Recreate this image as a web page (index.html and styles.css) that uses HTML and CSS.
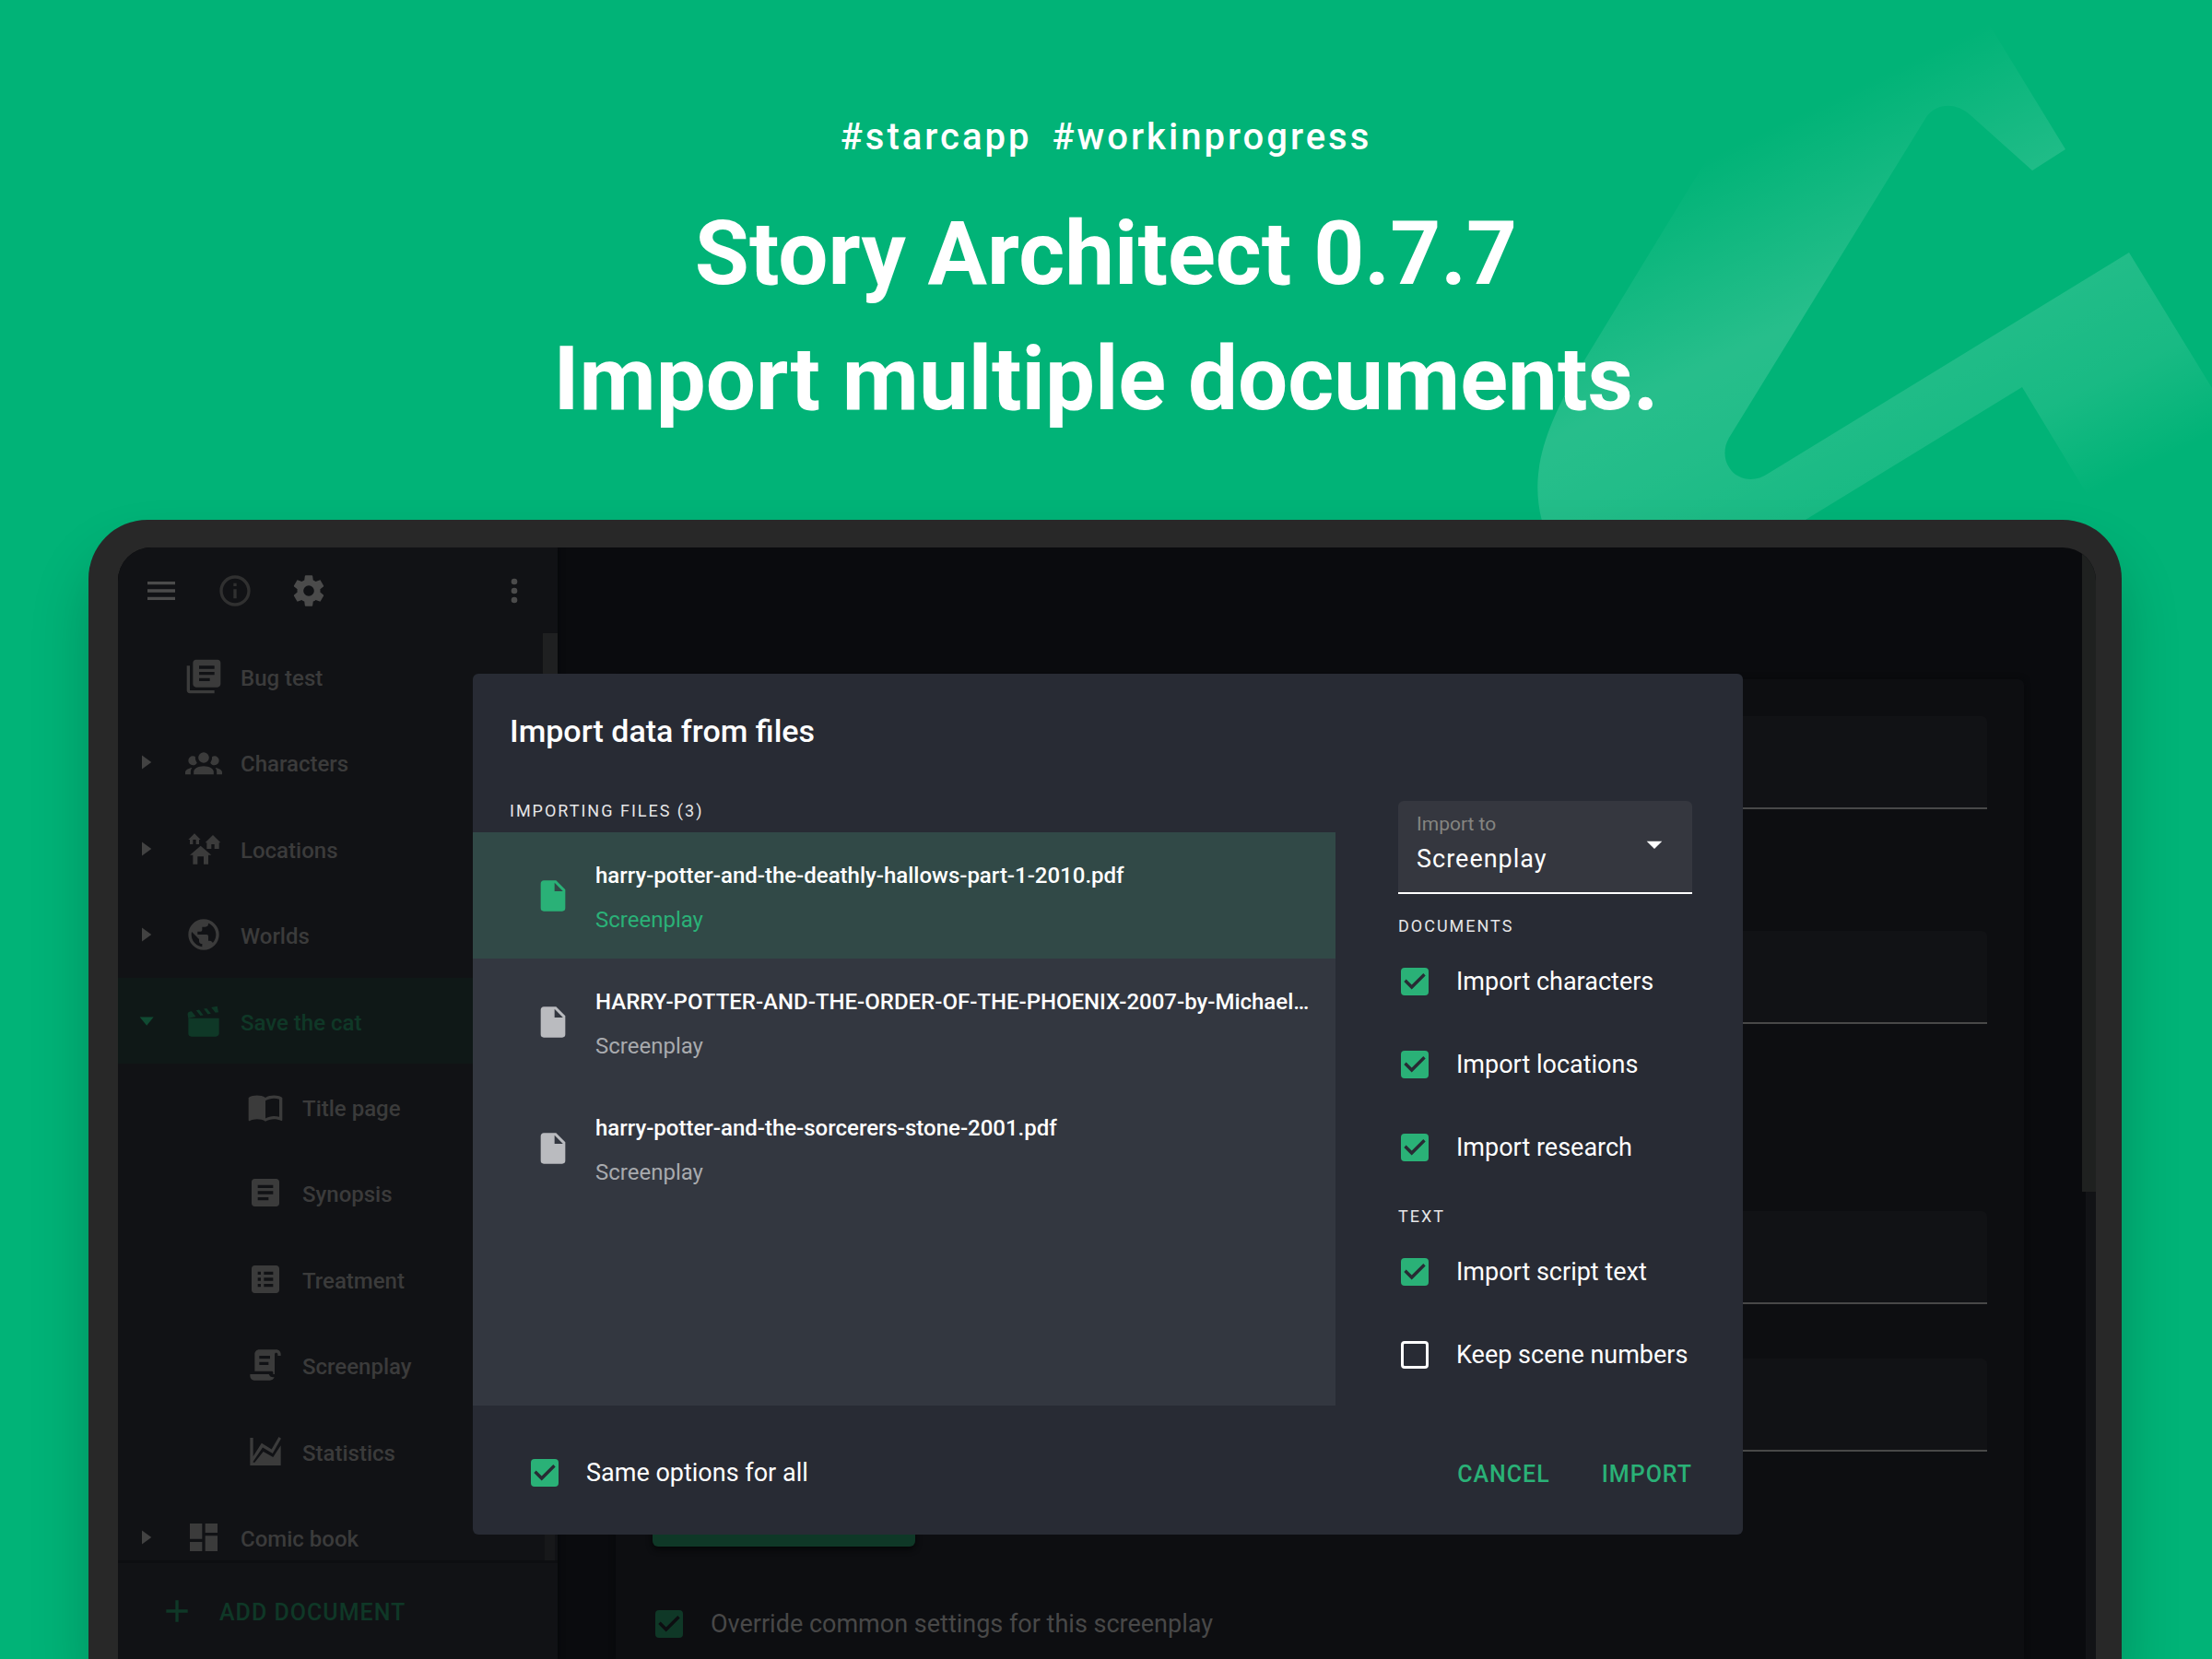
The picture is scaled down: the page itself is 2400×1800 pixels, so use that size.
FILE: index.html
```html
<!DOCTYPE html>
<html lang="en">
<head>
<meta charset="utf-8">
<meta name="viewport" content="width=device-width, initial-scale=1">
<title>Story Architect 0.7.7</title>
<link rel="stylesheet" href="styles.css">
</head>
<body class="page">
<svg class="emblem" viewBox="1660 0 740 600" aria-hidden="true">
  <defs>
    <linearGradient id="fade" gradientUnits="userSpaceOnUse" x1="2045" y1="78" x2="2266" y2="538">
      <stop offset="0" stop-color="#fff" stop-opacity="0"/>
      <stop offset=".4" stop-color="#fff" stop-opacity=".15"/>
      <stop offset=".57" stop-color="#fff" stop-opacity=".13"/>
      <stop offset=".79" stop-color="#fff" stop-opacity=".095"/>
      <stop offset="1" stop-color="#fff" stop-opacity="0"/>
    </linearGradient>
  </defs>
  <path fill="url(#fade)" d="M2142 0L2241 162L2205 185L2138 125C2122 110 2100 112 2090 127L1876 475C1869 487 1871 500 1876 507C1884 521 1904 524 1918 514L2310 274L2400 421V640L2320 628L2194 420L1900 600H1686C1655 535 1664 482 1719 391L1940 28L1960 0Z"/>
</svg>

<header class="hero">
  <p class="tags"><span>#starcapp</span><span>#workinprogress</span></p>
  <h1 class="headline">Story Architect 0.7.7<br>Import multiple documents.</h1>
</header>

<main class="device">
  <div class="screen">
    <aside class="sidebar">
      <div class="toolbar">
        <button class="tool" aria-label="Menu"><svg class="icon" viewBox="0 0 24 24"><path d="M3 6h18v2H3V6m0 5h18v2H3v-2m0 5h18v2H3v-2z"/></svg></button>
        <button class="tool tool-faint" aria-label="Information"><svg class="icon" viewBox="0 0 24 24"><path d="M11 9h2V7h-2m1 13c-4.41 0-8-3.59-8-8s3.59-8 8-8 8 3.59 8 8-3.59 8-8 8m0-18A10 10 0 0 0 2 12a10 10 0 0 0 10 10 10 10 0 0 0 10-10A10 10 0 0 0 12 2m-1 15h2v-6h-2v6z"/></svg></button>
        <button class="tool" aria-label="Settings"><svg class="icon" viewBox="0 0 24 24"><path d="M12 15.5A3.5 3.5 0 0 1 8.5 12 3.5 3.5 0 0 1 12 8.5a3.5 3.5 0 0 1 3.5 3.5 3.5 3.5 0 0 1-3.5 3.5m7.43-2.53c.04-.32.07-.64.07-.97 0-.33-.03-.66-.07-1l2.11-1.63c.19-.15.24-.42.12-.64l-2-3.46c-.12-.22-.39-.31-.61-.22l-2.49 1c-.52-.39-1.06-.73-1.69-.98l-.37-2.65A.506.506 0 0 0 14 2h-4c-.25 0-.46.18-.5.42l-.37 2.65c-.63.25-1.17.59-1.69.98l-2.49-1c-.22-.09-.49 0-.61.22l-2 3.46c-.13.22-.07.49.12.64L4.57 11c-.04.34-.07.67-.07 1 0 .33.03.65.07.97l-2.11 1.66c-.19.15-.25.42-.12.64l2 3.46c.12.22.39.3.61.22l2.49-1.01c.52.4 1.06.74 1.69.99l.37 2.65c.04.24.25.42.5.42h4c.25 0 .46-.18.5-.42l.37-2.65c.63-.26 1.17-.59 1.69-.99l2.49 1.01c.22.08.49 0 .61-.22l2-3.46c.12-.22.07-.49-.12-.64l-2.11-1.66z"/></svg></button>
        <button class="tool tool-end" aria-label="More"><svg class="icon" viewBox="0 0 24 24"><path d="M12 16a2 2 0 0 1 2 2 2 2 0 0 1-2 2 2 2 0 0 1-2-2 2 2 0 0 1 2-2m0-6a2 2 0 0 1 2 2 2 2 0 0 1-2 2 2 2 0 0 1-2-2 2 2 0 0 1 2-2m0-6a2 2 0 0 1 2 2 2 2 0 0 1-2 2 2 2 0 0 1-2-2 2 2 0 0 1 2-2z"/></svg></button>
      </div>

      <nav class="documents">
        <ul class="tree">
          <li class="node">
            <span class="arrow"></span>
            <svg class="icon" viewBox="0 0 24 24"><path fill-rule="evenodd" d="M19 23H3c-1.1 0-2-.9-2-2V5h2v16h16v2M21 1H7c-1.1 0-2 .9-2 2v14c0 1.1.9 2 2 2h14c1.1 0 2-.9 2-2V3c0-1.1-.9-2-2-2M9 5h10v2H9V5m0 4h10v2H9V9m0 4h7v2H9v-2z"/></svg>
            <span class="name">Bug test</span>
          </li>
          <li class="node">
            <svg class="arrow" viewBox="0 0 24 24"><path d="M9.6 7.5l6.2 4.5-6.2 4.5z"/></svg>
            <svg class="icon" viewBox="0 0 24 24"><path d="M12 5.5A3.5 3.5 0 0 1 15.5 9 3.5 3.5 0 0 1 12 12.5 3.5 3.5 0 0 1 8.5 9 3.5 3.5 0 0 1 12 5.5M5 8c.56 0 1.08.15 1.53.42-.15 1.43.27 2.85 1.13 3.96C7.16 13.34 6.16 14 5 14a3 3 0 0 1-3-3 3 3 0 0 1 3-3m14 0a3 3 0 0 1 3 3 3 3 0 0 1-3 3c-1.16 0-2.16-.66-2.66-1.62a5.536 5.536 0 0 0 1.13-3.96c.45-.27.97-.42 1.53-.42M5.5 18.25c0-2.07 2.91-3.75 6.5-3.75s6.5 1.68 6.5 3.75V20h-13v-1.75M0 20v-1.5c0-1.39 1.89-2.56 4.45-2.9-.59.68-.95 1.62-.95 2.65V20H0m24 0h-3.5v-1.75c0-1.03-.36-1.97-.95-2.65 2.56.34 4.45 1.51 4.45 2.9V20z"/></svg>
            <span class="name">Characters</span>
          </li>
          <li class="node">
            <svg class="arrow" viewBox="0 0 24 24"><path d="M9.6 7.5l6.2 4.5-6.2 4.5z"/></svg>
            <svg class="icon" viewBox="0 0 24 24"><path d="M17 16h-2v6h-3v-5H8v5H5v-6H3l7-6 7 6M6 2l4 4H9v3H7V6H5v3H3V6H2l4-4m12 1l5 5h-1v4h-3V9h-2v3h-3V8h-1l5-5z"/></svg>
            <span class="name">Locations</span>
          </li>
          <li class="node">
            <svg class="arrow" viewBox="0 0 24 24"><path d="M9.6 7.5l6.2 4.5-6.2 4.5z"/></svg>
            <svg class="icon" viewBox="0 0 24 24"><path d="M17.9 17.39c-.26-.8-1.01-1.39-1.9-1.39h-1v-3a1 1 0 0 0-1-1H8v-2h2a1 1 0 0 0 1-1V7h2a2 2 0 0 0 2-2v-.41c2.93 1.18 5 4.05 5 7.41 0 2.08-.8 3.97-2.1 5.39M11 19.93c-3.95-.49-7-3.85-7-7.93 0-.62.08-1.22.21-1.79L9 15v1a2 2 0 0 0 2 2m1-16A10 10 0 0 0 2 12a10 10 0 0 0 10 10 10 10 0 0 0 10-10A10 10 0 0 0 12 2z"/></svg>
            <span class="name">Worlds</span>
          </li>
          <li class="node node-selected">
            <svg class="arrow" viewBox="0 0 24 24"><path d="M8.2 9.3h9l-4.5 5.6z"/></svg>
            <svg class="icon" viewBox="0 0 24 24"><path d="M20.84 2.18l-3.93.78 2.74 3.54 1.97-.4-.78-3.92m-6.87 1.36L12 3.93l2.75 3.53 1.96-.39-2.74-3.53m-4.9.96l-1.97.41 2.75 3.53 1.96-.39L9.07 4.5m-4.91 1l-.98.19a1.995 1.995 0 0 0-1.57 2.35L2 10l4.9-.97L4.16 5.5M2 10v10a2 2 0 0 0 2 2h16c1.11 0 2-.89 2-2V10H2z"/></svg>
            <span class="name">Save the cat</span>
          </li>
          <li class="node node-child">
            <svg class="icon" viewBox="0 0 24 24"><path fill-rule="evenodd" d="M21 5c-1.11-.35-2.33-.5-3.5-.5-1.95 0-4.05.4-5.5 1.5-1.45-1.1-3.55-1.5-5.5-1.5S2.45 4.9 1 6v14.65c0 .25.25.5.5.5.1 0 .15-.05.25-.05C3.1 20.45 5.05 20 6.5 20c1.95 0 4.05.4 5.5 1.5 1.35-.85 3.8-1.5 5.5-1.5 1.65 0 3.35.3 4.75 1.05.1.05.15.05.25.05.25 0 .5-.25.5-.5V6c-.6-.45-1.25-.75-2-1m0 13.5c-1.1-.35-2.3-.5-3.5-.5-1.7 0-4.15.65-5.5 1.5V8c1.35-.85 3.8-1.5 5.5-1.5 1.2 0 2.4.15 3.5.5v11.5z"/></svg>
            <span class="name">Title page</span>
          </li>
          <li class="node node-child">
            <svg class="icon" viewBox="0 0 24 24"><path fill-rule="evenodd" d="M19 3H5c-1.1 0-2 .9-2 2v14c0 1.1.9 2 2 2h14c1.1 0 2-.9 2-2V5c0-1.1-.9-2-2-2M7 7h10v2H7V7m0 4h10v2H7v-2m0 4h7v2H7v-2z"/></svg>
            <span class="name">Synopsis</span>
          </li>
          <li class="node node-child">
            <svg class="icon" viewBox="0 0 24 24"><path fill-rule="evenodd" d="M19 3H5c-1.1 0-2 .9-2 2v14c0 1.1.9 2 2 2h14c1.1 0 2-.9 2-2V5c0-1.1-.9-2-2-2M7 7h2v2H7V7m0 4h2v2H7v-2m0 4h2v2H7v-2m4-8h6v2h-6V7m0 4h6v2h-6v-2m0 4h6v2h-6v-2z"/></svg>
            <span class="name">Treatment</span>
          </li>
          <li class="node node-child">
            <svg class="icon" viewBox="0 0 24 24"><path fill-rule="evenodd" d="M17.8 20c-.4 1.2-1.5 2-2.8 2H5c-1.7 0-3-1.3-3-3v-1h12.2c.4 1.2 1.5 2 2.8 2h.8M19 2H8C6.3 2 5 3.3 5 5v11h11c.6 0 1 .4 1 1v1h1V5c0-.6.4-1 1-1s1 .4 1 1v1h2V5c0-1.7-1.3-3-3-3M8 6h7v2H8V6m0 4h6v2H8v-2z"/></svg>
            <span class="name">Screenplay</span>
          </li>
          <li class="node node-child">
            <svg class="icon" viewBox="0 0 24 24"><path d="M2 3h2v12.200L9.500 6.500l6.500 4L20.700 2.400l1.500 1-5.500 9.800-6.500-3.900L4 18.500v.5h1l5.600-7 6.400 3.600 5-7.600V21H2z"/></svg>
            <span class="name">Statistics</span>
          </li>
          <li class="node">
            <svg class="arrow" viewBox="0 0 24 24"><path d="M9.6 7.5l6.2 4.5-6.2 4.5z"/></svg>
            <svg class="icon" viewBox="0 0 24 24"><path d="M3 3h8v10H3zM13 3h8v6h-8zM3 15h8v6H3zM13 11h8v10h-8z"/></svg>
            <span class="name">Comic book</span>
          </li>
        </ul>
        <div class="scrollbar scrollbar-tree"><div class="thumb"></div></div>
      </nav>

      <div class="sidebar-footer">
        <button class="add-document">
          <svg class="icon" viewBox="0 0 24 24"><path d="M19 13h-6v6h-2v-6H5v-2h6V5h2v6h6v2z"/></svg>
          <span class="name">ADD DOCUMENT</span>
        </button>
      </div>
    </aside>

    <section class="editor">
      <form class="settings-card">
        <input class="text-field" type="text" aria-label="Title">
        <input class="text-field text-field-second" type="text" aria-label="Tagline">
        <input class="text-field text-field-third" type="text" aria-label="Logline">
        <input class="text-field text-field-fourth" type="text" aria-label="Header">
        <button class="filled-button" type="button" aria-label="Apply"></button>
        <label class="check check-dim"><input class="box" type="checkbox" checked>Override common settings for this screenplay</label>
      </form>
      <div class="scrollbar scrollbar-editor"><div class="thumb"></div></div>
    </section>

    <div class="overlay">
      <div class="dialog" role="dialog" aria-labelledby="dialog-title">
        <h2 class="dialog-title" id="dialog-title">Import data from files</h2>
        <div class="dialog-body">
          <section class="files">
            <h3 class="caption files-caption">IMPORTING FILES (3)</h3>
            <ul class="file-list">
              <li class="file file-selected">
                <svg class="icon" viewBox="0 0 24 24"><path d="M13 9V3.500L18.500 9M6 2c-1.100 0-2 .9-2 2v16a2 2 0 0 0 2 2h12a2 2 0 0 0 2-2V8l-6-6H6z"/></svg>
                <div class="file-text"><span class="file-name">harry-potter-and-the-deathly-hallows-part-1-2010.pdf</span><span class="file-kind">Screenplay</span></div>
              </li>
              <li class="file">
                <svg class="icon" viewBox="0 0 24 24"><path d="M13 9V3.500L18.500 9M6 2c-1.100 0-2 .9-2 2v16a2 2 0 0 0 2 2h12a2 2 0 0 0 2-2V8l-6-6H6z"/></svg>
                <div class="file-text"><span class="file-name">HARRY-POTTER-AND-THE-ORDER-OF-THE-PHOENIX-2007-by-Michael…</span><span class="file-kind">Screenplay</span></div>
              </li>
              <li class="file">
                <svg class="icon" viewBox="0 0 24 24"><path d="M13 9V3.500L18.500 9M6 2c-1.100 0-2 .9-2 2v16a2 2 0 0 0 2 2h12a2 2 0 0 0 2-2V8l-6-6H6z"/></svg>
                <div class="file-text"><span class="file-name">harry-potter-and-the-sorcerers-stone-2001.pdf</span><span class="file-kind">Screenplay</span></div>
              </li>
            </ul>
          </section>

          <section class="options">
            <div class="select-field">
              <label class="select-label" for="import-to">Import to</label>
              <select class="select" id="import-to"><option>Screenplay</option></select>
              <svg class="icon select-arrow" viewBox="0 0 24 24"><path d="M7 10l5 5 5-5z"/></svg>
            </div>
            <h3 class="caption">DOCUMENTS</h3>
            <label class="check"><input class="box" type="checkbox" checked>Import characters</label>
            <label class="check"><input class="box" type="checkbox" checked>Import locations</label>
            <label class="check"><input class="box" type="checkbox" checked>Import research</label>
            <h3 class="caption">TEXT</h3>
            <label class="check"><input class="box" type="checkbox" checked>Import script text</label>
            <label class="check"><input class="box" type="checkbox">Keep scene numbers</label>
          </section>
        </div>
        <footer class="dialog-footer">
          <label class="check"><input class="box" type="checkbox" checked>Same options for all</label>
          <div class="actions">
            <button class="text-button">CANCEL</button>
            <button class="text-button">IMPORT</button>
          </div>
        </footer>
      </div>
    </div>
  </div>
</main>
</body>
</html>
```

FILE: styles.css
```css
* { box-sizing: border-box; }

.page {
  --green: #2ab177;
  --green-dim: #0f3827;
  --dialog: #282b34;
  margin: 0;
  height: 100vh;
  overflow: hidden;
  display: flex;
  flex-direction: column;
  position: relative;
  background: #01b377;
  color: #fff;
  font-family: Roboto, sans-serif;
}

h1, h2, h3, p, ul { margin: 0; padding: 0; }
ul { list-style: none; }
button, input, select { font: inherit; color: inherit; border: 0; background: none; padding: 0; margin: 0; }

.icon, .arrow { width: 40px; height: 40px; flex: none; fill: currentColor; display: block; }

/* Hero */
.emblem { position: absolute; top: 0; right: 0; width: 740px; height: 600px; }
.hero { position: relative; padding: 125px 32px 85px; text-align: center; }
.tags { display: flex; justify-content: center; gap: 22px; margin-bottom: 34px; font-size: 40px; font-weight: 500; line-height: 48px; letter-spacing: 3px; }
.headline { font-size: 96px; font-weight: 700; line-height: 136px; }

/* Device frame */
.device {
  flex: 1;
  min-height: 0;
  position: relative;
  display: flex;
  margin: 0 98px 0 96px;
  padding: 30px 28px 0 32px;
  border-radius: 64px 64px 0 0;
  background: #282828;
  box-shadow: 0 40px 64px rgba(0, 0, 0, .2);
}
.screen {
  flex: 1;
  position: relative;
  overflow: hidden;
  display: grid;
  grid-template-columns: 477px minmax(0, 1fr);
  border-radius: 36px 36px 0 0;
  background: #0a0b0e;
}

/* Sidebar */
.sidebar { display: flex; flex-direction: column; min-height: 0; background: #111215; color: #3b3b3b; box-shadow: 0 0 6px #060709; z-index: 1; }
.toolbar { display: flex; align-items: center; gap: 40px; height: 93px; padding: 0 27px; flex: none; color: #4b4b4b; }
.tool-faint { color: #303030; }
.tool-end { margin-left: auto; }
.documents { flex: 1; min-height: 0; display: flex; overflow: hidden; }
.tree { flex: 1; height: 1028px; display: grid; grid-template-rows: repeat(11, 1fr); margin-right: -16px; }
.node { display: flex; align-items: center; padding: 0 10px; font-size: 24px; font-weight: 500; line-height: 32px; }
.node .icon { margin-left: 23px; margin-right: 20px; }
.node .arrow { color: #424242; }
.node-child { padding-left: 117px; }
.node-selected { background: #0f1817; color: var(--green-dim); }
.node-selected .arrow { color: #104a32; }
.name { padding-top: 4px; }
.scrollbar { width: 16px; display: flex; flex-direction: column; flex: none; }
.scrollbar::after { content: ""; flex: 1; margin: 0 3px 0 2px; background: #17181a; }
.thumb { background: #1f2021; }
.scrollbar-tree .thumb { height: 60%; }
.sidebar-footer { flex: none; height: 107px; padding: 0 44px; border-top: 3px solid #0d0e11; display: flex; align-items: center; }
.add-document { display: flex; align-items: center; gap: 26px; color: var(--green-dim); font-size: 25px; font-weight: 500; line-height: 32px; letter-spacing: 1px; }

/* Editor behind the dialog */
.editor { display: flex; min-height: 0; }
.settings-card { flex: 1; display: flex; flex-direction: column; align-items: flex-start; margin: 143px 63px 0; padding: 40px; border-radius: 6px 6px 0 0; background: #0d0e11; box-shadow: 0 0 6px #08090b; }
.text-field { flex: none; width: 100%; height: 101px; border-bottom: 2px solid #484848; border-radius: 6px 6px 0 0; background: #111215; }
.text-field-second { margin-top: 132px; }
.text-field-third { margin-top: 203px; }
.text-field-fourth { margin-top: 59px; }
.filled-button { flex: none; width: 285px; height: 56px; margin: 47px 0 54px; border-radius: 6px; background: var(--green-dim); box-shadow: 0 3px 6px #050607; }
.scrollbar-editor { width: 15px; }
.scrollbar-editor::after { margin: 0 0 0 4px; background: #121316; }
.scrollbar-editor .thumb { height: 58%; background: #1f2120; }

/* Check boxes */
.check { flex: none; display: flex; align-items: center; gap: 30px; height: 90px; padding-left: 3px; font-size: 27px; line-height: 36px; }
.box { appearance: none; width: 30px; height: 30px; flex: none; border: 3px solid currentColor; border-radius: 4px; }
.box:checked { border: 0; background: var(--green); }
.box:checked::before { content: ""; display: block; height: 100%; background: var(--dialog); clip-path: polygon(39% 78%, 11% 50%, 19% 42%, 39% 62%, 81% 20%, 89% 28%); }
.check-dim { height: 60px; color: #484848; }
.check-dim .box:checked { background: var(--green-dim); }
.check-dim .box:checked::before { background: #0d0e11; }

/* Import dialog */
.overlay { position: absolute; inset: 0; z-index: 2; display: flex; justify-content: center; align-items: flex-start; padding: 137px 32px 0 34px; }
.dialog { width: 1378px; max-width: 100%; border-radius: 6px; background: var(--dialog); overflow: hidden; }
.dialog-title { padding: 42px 40px 56px; font-size: 34px; font-weight: 500; line-height: 40px; }
.dialog-body { display: grid; grid-template-columns: minmax(0, 1fr) 319px; column-gap: 68px; padding-right: 55px; }
.caption { font-size: 18px; font-weight: 400; line-height: 22px; letter-spacing: 2px; color: #e6e6e8; }
.files { display: flex; flex-direction: column; }
.files-caption { padding: 0 40px 12px; }
.file-list { flex: 1; background: #333740; }
.file { display: flex; align-items: center; gap: 26px; height: 137px; padding: 0 40px 0 67px; color: #babbbf; font-size: 24px; line-height: 32px; }
.file-selected { background: #314947; color: var(--green); }
.file-text { display: grid; gap: 16px; min-width: 0; padding-top: 5px; }
.file-name { color: #fff; font-weight: 500; white-space: nowrap; }
.file-kind { color: #a8aaae; }
.file-selected .file-kind { color: var(--green); }

.options { padding-bottom: 10px; }
.select-field { position: relative; display: flex; flex-direction: column; gap: 8px; height: 101px; padding: 13px 20px 0; border-bottom: 2px solid #fff; border-radius: 6px 6px 0 0; background: #35373f; }
.select-label { font-size: 21px; line-height: 24px; color: #858581; }
.select { appearance: none; font-size: 27px; line-height: 36px; letter-spacing: 1px; }
.select-arrow { position: absolute; right: 21px; top: 27px; pointer-events: none; }
.options .caption { padding: 24px 0 4px; }
.options .check + .caption { padding-top: 19px; }

.dialog-footer { display: flex; justify-content: space-between; align-items: center; height: 140px; padding: 6px 55px 0 60px; }
.actions { display: flex; gap: 56px; padding-top: 3px; }
.text-button { color: var(--green); font-size: 25px; font-weight: 500; line-height: 32px; letter-spacing: 1px; }
```
